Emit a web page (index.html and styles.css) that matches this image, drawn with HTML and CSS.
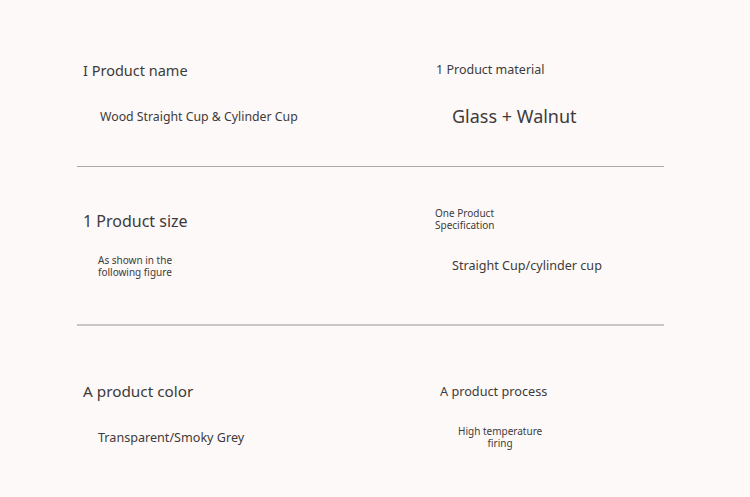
FILE: index.html
```html
<!DOCTYPE html>
<html>
<head>
<meta charset="utf-8">
<link rel="stylesheet" href="styles.css">
</head>
<body>
<main class="sheet">
  <section class="row row-1">
    <div class="cell left">
      <div class="label l-name">I Product name</div>
      <div class="value v-name">Wood Straight Cup &amp; Cylinder Cup</div>
    </div>
    <div class="cell right">
      <div class="label l-material">1 Product material</div>
      <div class="value v-material">Glass + Walnut</div>
    </div>
  </section>
  <section class="row row-2">
    <div class="cell left">
      <div class="label l-size">1 Product size</div>
      <div class="value v-size">As shown in the<br>following figure</div>
    </div>
    <div class="cell right">
      <div class="label l-spec">One Product<br>Specification</div>
      <div class="value v-spec">Straight Cup/cylinder cup</div>
    </div>
  </section>
  <section class="row row-3">
    <div class="cell left">
      <div class="label l-color">A product color</div>
      <div class="value v-color">Transparent/Smoky Grey</div>
    </div>
    <div class="cell right">
      <div class="label l-process">A product process</div>
      <div class="value v-process">High temperature<br>firing</div>
    </div>
  </section>
</main>
</body>
</html>
```

FILE: styles.css
```css
html, body {
  margin: 0;
  padding: 0;
  background: #fdf9f8;
}
body {
  font-family: "Noto Sans", "Open Sans", sans-serif;
  color: #3d3b3b;
  width: 750px;
  height: 497px;
  overflow: hidden;
}
.sheet {
  margin-left: 77px;
  width: 587px;
}
.row {
  display: grid;
  grid-template-columns: 359px 228px;
}
.row-1 { height: 166px; border-bottom: 1px solid #a9a7a6; }
.row-2 { height: 157px; border-bottom: 2px solid #c9c7c6; }
.cell { display: flex; flex-direction: column; align-items: flex-start; }
.left { padding-left: 6px; }
.right { padding-left: 0; }
.label, .value { white-space: nowrap; }

.l-name { font-size: 14.5px; line-height: 20px; margin-top: 60px; }
.v-name { font-size: 12.3px; line-height: 16px; margin-top: 29px; margin-left: 17px; }
.l-material { font-size: 12.5px; line-height: 16px; margin-top: 62px; }
.v-material { font-size: 18px; line-height: 24px; margin-top: 26px; margin-left: 16px; }

.l-size { font-size: 16px; line-height: 20px; margin-top: 44px; }
.v-size { font-size: 10px; line-height: 12px; margin-top: 23px; margin-left: 15px; }
.l-spec { font-size: 10px; line-height: 12px; margin-top: 40px; margin-left: -1px; }
.v-spec { font-size: 12.6px; line-height: 16px; margin-top: 27px; margin-left: 16px; }

.l-color { font-size: 15.3px; line-height: 20px; margin-top: 55px; }
.v-color { font-size: 12.6px; line-height: 16px; margin-top: 29px; margin-left: 15px; }
.l-process { font-size: 12.7px; line-height: 18px; margin-top: 56px; margin-left: 4px; }
.v-process { font-size: 10px; line-height: 12px; margin-top: 25px; margin-left: 22px; text-align: center; }
```
